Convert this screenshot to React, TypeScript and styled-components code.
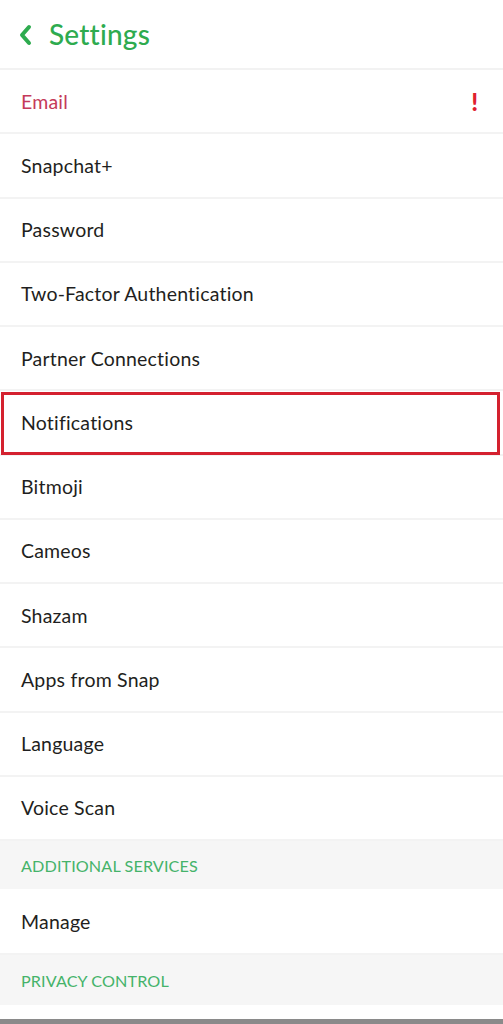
import React from "react";
import styled, { createGlobalStyle } from "styled-components";

const Global = createGlobalStyle`
  html, body { margin: 0; padding: 0; background: #fff; }
  body { font-family: "Lato", "Noto Sans", sans-serif; -webkit-font-smoothing: antialiased; }
  #root { width: 503px; height: 1024px; overflow: hidden; }
`;

const Page = styled.div`
  width: 503px;
  height: 1024px;
  display: flex;
  flex-direction: column;
  background: #fff;
`;

const Header = styled.header`
  height: 68px;
  flex: none;
  display: flex;
  align-items: center;
  gap: 17px;
  padding-left: 18px;
  border-bottom: 2px solid #f2f2f2;
  box-sizing: content-box;
`;

const Title = styled.h1`
  margin: 0;
  font-size: 28px;
  font-weight: 500;
  color: #2eab4f;
  letter-spacing: 0.2px;
`;

const BackIcon = styled.svg`
  width: 14px;
  height: 22px;
  margin-top: 1px;
`;

const Row = styled.div<{ $highlight?: boolean; $h?: number }>`
  height: ${(p) => p.$h ?? 64.25}px;
  flex: none;
  box-sizing: border-box;
  display: flex;
  align-items: center;
  justify-content: space-between;
  padding: 0 21px;
  border-bottom: 2px solid #f3f3f3;
  position: relative;
  ${(p) =>
    p.$highlight &&
    `
    &::after {
      content: "";
      position: absolute;
      left: 1px;
      right: 3px;
      top: 1px;
      bottom: -1px;
      border: 3px solid #d4212f;
    }
  `}
`;

const Label = styled.span<{ $alert?: boolean }>`
  font-size: 19.5px;
  letter-spacing: 0.2px;
  color: ${(p) => (p.$alert ? "#c53a5a" : "#1f1f21")};
`;

const Alert = styled.span`
  font-size: 24px;
  font-weight: 900;
  color: #e0202e;
  margin-right: 4px;
`;

const Section = styled.div<{ $h: number }>`
  height: ${(p) => p.$h}px;
  flex: none;
  background: #f6f6f6;
  display: flex;
  align-items: center;
  padding: 0 21px;
`;

const SectionLabel = styled.span`
  font-size: 16.2px;
  color: #45b36a;
  letter-spacing: 0.1px;
`;

const Spacer = styled.div`
  flex: 1;
`;

const BottomBar = styled.div`
  height: 5px;
  flex: none;
  background: #8a8a8a;
`;

const items = [
  "Snapchat+",
  "Password",
  "Two-Factor Authentication",
  "Partner Connections",
  "Notifications",
  "Bitmoji",
  "Cameos",
  "Shazam",
  "Apps from Snap",
  "Language",
  "Voice Scan",
];

export default function App() {
  return (
    <>
      <Global />
      <Page>
        <Header>
          <BackIcon viewBox="0 0 14 22">
            <path d="M11 3 L4 11 L11 19" fill="none" stroke="#2eab4f" strokeWidth="4" strokeLinecap="round" strokeLinejoin="round" />
          </BackIcon>
          <Title>Settings</Title>
        </Header>
        <Row>
          <Label $alert>Email</Label>
          <Alert>!</Alert>
        </Row>
        {items.map((t) => (
          <Row key={t} $highlight={t === "Notifications"}>
            <Label>{t}</Label>
          </Row>
        ))}
        <Section $h={48}>
          <SectionLabel>ADDITIONAL SERVICES</SectionLabel>
        </Section>
        <Row $h={66}>
          <Label>Manage</Label>
        </Row>
        <Section $h={50}>
          <SectionLabel>PRIVACY CONTROL</SectionLabel>
        </Section>
        <Spacer />
        <BottomBar />
      </Page>
    </>
  );
}
